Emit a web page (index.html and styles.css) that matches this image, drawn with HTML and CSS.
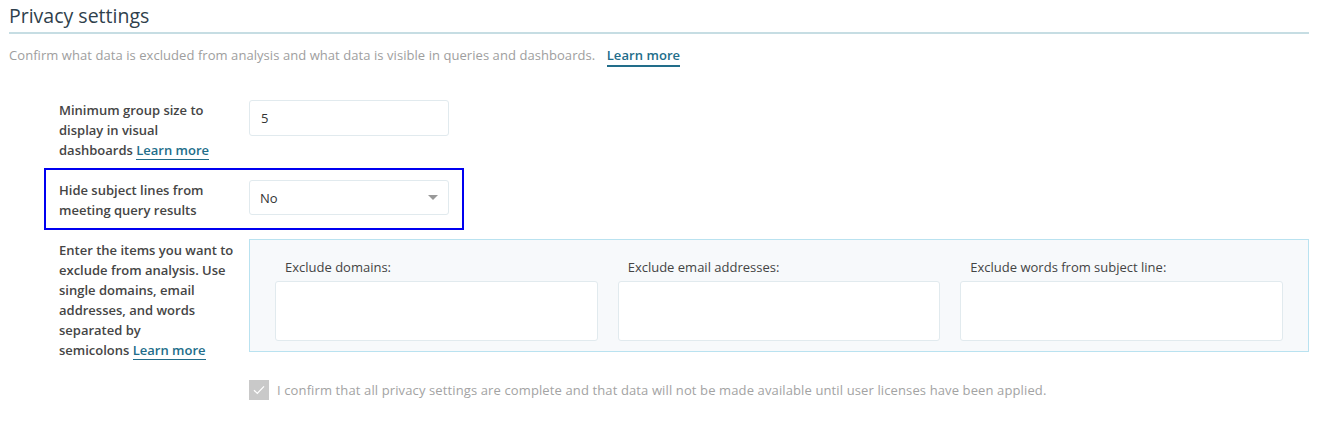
FILE: index.html
```html
<!DOCTYPE html>
<html lang="en">
<head>
<meta charset="utf-8">
<title>Privacy settings</title>
<link rel="stylesheet" href="styles.css">
</head>
<body>
<div class="page">
  <h1 class="title">Privacy settings</h1>
  <p class="intro">Confirm what data is excluded from analysis and what data is visible in queries and dashboards. <a class="link link-strong" href="#">Learn more</a></p>

  <div class="rows">
    <div class="row">
      <div class="label">Minimum group size to display in visual <span class="nowrap">dashboards <a class="link" href="#">Learn more</a></span></div>
      <div class="field"><input class="input" type="text" value="5"></div>
    </div>

    <div class="row row-highlight">
      <div class="label">Hide subject lines from meeting query results</div>
      <div class="field">
        <div class="select"><span>No</span><span class="caret"></span></div>
      </div>
    </div>

    <div class="row row-wide">
      <div class="label">Enter the items you want to exclude from analysis. Use single domains, email addresses, and words separated by <span class="nowrap">semicolons <a class="link" href="#">Learn more</a></span></div>
      <div class="exclude-box">
        <div class="exclude-col">
          <div class="exclude-label">Exclude domains:</div>
          <div class="textarea"></div>
        </div>
        <div class="exclude-col">
          <div class="exclude-label">Exclude email addresses:</div>
          <div class="textarea"></div>
        </div>
        <div class="exclude-col">
          <div class="exclude-label">Exclude words from subject line:</div>
          <div class="textarea"></div>
        </div>
      </div>
    </div>
  </div>

  <div class="confirm">
    <span class="checkbox">
      <svg width="12" height="10" viewBox="0 0 12 10"><path d="M1 5.2 L4.3 8.4 L11 1.4" fill="none" stroke="#fff" stroke-width="1.3"/></svg>
    </span>
    <span class="confirm-text">I confirm that all privacy settings are complete and that data will not be made available until user licenses have been applied.</span>
  </div>
</div>
</body>
</html>
```
FILE: styles.css
```css
* { box-sizing: border-box; }
html, body { margin: 0; padding: 0; background: #fff; }
body {
  font-family: "Open Sans", "Noto Sans", "Liberation Sans", sans-serif;
  font-size: 13px;
  color: #444;
}
.page { padding: 0 9px; }
.title {
  margin: 0;
  padding-top: 3px;
  font-size: 19.5px;
  font-weight: 400;
  line-height: 26px;
  color: #2f3f4c;
  padding-bottom: 3px;
  border-bottom: 2px solid #c6dde3;
}
.intro {
  margin: 11px 0 0;
  line-height: 20px;
  color: #9e9e9e;
  font-size: 13px;
  letter-spacing: 0.06px;
}
.link {
  color: #226d8a;
  text-decoration: none;
  border-bottom: 1px solid #226d8a;
}
.link-strong {
  font-weight: 600;
  margin-left: 8px;
  border-bottom-width: 2px;
  padding-bottom: 1px;
}
.nowrap { white-space: nowrap; }
.rows {
  display: flex;
  flex-direction: column;
  align-items: flex-start;
  margin-top: 35px;
  margin-left: 35px;
}
.row {
  display: flex;
  align-items: flex-start;
  padding-left: 15px;
}
.row + .row { margin-top: 8px; }
.label {
  width: 176px;
  margin-right: 14px;
  font-weight: 600;
  line-height: 20px;
  color: #454545;
}
.field { width: 200px; }
.input {
  display: block;
  width: 200px;
  height: 36px;
  border: 1px solid #e1eaee;
  border-radius: 3px;
  padding: 0 11px;
  font: inherit;
  color: #333;
  outline: none;
}
.row-highlight {
  border: 2px solid #0000f0;
  padding: 10px 13px 8px 13px;
}
.select {
  height: 35px;
  border: 1px solid #e1eaee;
  border-radius: 3px;
  padding: 0 10px;
  display: flex;
  align-items: center;
  justify-content: space-between;
  color: #333;
}
.caret {
  width: 0;
  height: 0;
  border-left: 5px solid transparent;
  border-right: 5px solid transparent;
  border-top: 5px solid #999;
}
.row.row-wide {
  align-self: stretch;
  margin-top: 9px;
}
.row-wide .label { padding-top: 1px; }
.exclude-box {
  flex: 1;
  display: grid;
  grid-template-columns: repeat(3, 1fr);
  column-gap: 20px;
  background: #f7f9fb;
  border: 1px solid #b9e2f0;
  padding: 17px 25px 10px;
}
.exclude-label {
  padding-left: 10px;
  line-height: 20px;
  margin-bottom: 4px;
  color: #444;
}
.textarea {
  height: 60px;
  background: #fff;
  border: 1px solid #e1eaee;
  border-radius: 3px;
}
.confirm {
  display: flex;
  align-items: center;
  margin-top: 20px;
  margin-left: 240px;
}
.checkbox {
  width: 20px;
  height: 20px;
  background: #c9c9c9;
  display: flex;
  align-items: center;
  justify-content: center;
  margin-right: 8px;
}
.confirm-text { color: #a3a3a3; letter-spacing: 0.12px; }
```
